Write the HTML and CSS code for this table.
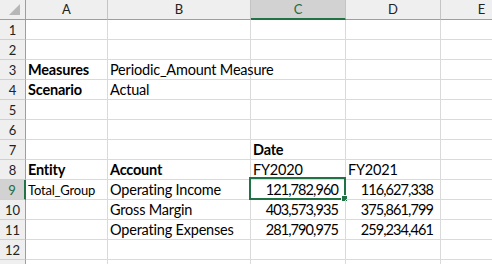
FILE: index.html
```html
<!DOCTYPE html>
<html lang="en">
<head>
    <meta charset="UTF-8">
    <title>Sheet1</title>
    <link rel="stylesheet" href="styles.css">
</head>
<body>

<div class="sheet">
    <!-- column headers -->
    <div class="corner">
        <svg width="26" height="20" viewBox="0 0 26 20"><polygon points="21,5 21,16 10,16" fill="#b7b7b7"/></svg>
    </div>
    <div class="col-head">A</div>
    <div class="col-head">B</div>
    <div class="col-head active">C</div>
    <div class="col-head">D</div>
    <div class="col-head">E</div>

    <div class="row-head">1</div><div class="cell"></div><div class="cell"></div><div class="cell"></div><div class="cell"></div><div class="cell"></div>
    <div class="row-head">2</div><div class="cell"></div><div class="cell"></div><div class="cell"></div><div class="cell"></div><div class="cell"></div>
    <div class="row-head">3</div><div class="cell bold">Measures</div><div class="cell">Periodic_Amount Measure</div><div class="cell"></div><div class="cell"></div><div class="cell"></div>
    <div class="row-head">4</div><div class="cell bold">Scenario</div><div class="cell">Actual</div><div class="cell"></div><div class="cell"></div><div class="cell"></div>
    <div class="row-head">5</div><div class="cell"></div><div class="cell"></div><div class="cell"></div><div class="cell"></div><div class="cell"></div>
    <div class="row-head">6</div><div class="cell"></div><div class="cell"></div><div class="cell"></div><div class="cell"></div><div class="cell"></div>
    <div class="row-head">7</div><div class="cell"></div><div class="cell"></div><div class="cell bold">Date</div><div class="cell"></div><div class="cell"></div>
    <div class="row-head">8</div><div class="cell bold">Entity</div><div class="cell bold">Account</div><div class="cell">FY2020</div><div class="cell">FY2021</div><div class="cell"></div>
    <div class="row-head active">9</div><div class="cell small">Total_Group</div><div class="cell">Operating Income</div><div class="cell num selected">121,782,960<span class="sel-box"></span><span class="handle"></span></div><div class="cell num">116,627,338</div><div class="cell"></div>
    <div class="row-head">10</div><div class="cell"></div><div class="cell">Gross Margin</div><div class="cell num">403,573,935</div><div class="cell num">375,861,799</div><div class="cell"></div>
    <div class="row-head">11</div><div class="cell"></div><div class="cell">Operating Expenses</div><div class="cell num">281,790,975</div><div class="cell num">259,234,461</div><div class="cell"></div>
    <div class="row-head">12</div><div class="cell"></div><div class="cell"></div><div class="cell"></div><div class="cell"></div><div class="cell"></div>
    <div class="row-head"></div><div class="cell"></div><div class="cell"></div><div class="cell"></div><div class="cell"></div><div class="cell"></div>
</div>

</body>
</html>
```

FILE: styles.css
```css
body {
    margin: 0;
    background-color: white;
    overflow: hidden;
    font-family: Lato, "Open Sans", sans-serif;
}

.sheet {
    display: grid;
    grid-template-columns: 26px 82px 143px 95px 95px 82px;
    grid-auto-rows: 20px;
    width: 492px;
    height: 264px;
    overflow: hidden;
}

.corner,
.col-head,
.row-head {
    background-color: #efefef;
    color: #222;
    font-size: 13px;
    box-sizing: border-box;
}

.corner {
    border-right: 1px solid #9e9e9e;
    border-bottom: 1px solid #9e9e9e;
}

.corner svg {
    display: block;
    margin: -1px 0 0 -1px;
}

.col-head {
    text-align: center;
    line-height: 19px;
    border-right: 1px solid #c4c4c4;
    border-bottom: 1px solid #9e9e9e;
}

.col-head.active {
    background-color: #d2d2d2;
    color: #1e6b40;
    border-bottom: 2px solid #217346;
    line-height: 18px;
}

.row-head {
    text-align: center;
    line-height: 20px;
    border-right: 1px solid #9e9e9e;
    border-bottom: 1px solid #d0d0d0;
}

.row-head.active {
    background-color: #d2d2d2;
    color: #1e6b40;
    border-right: 2px solid #217346;
}

.cell {
    position: relative;
    box-sizing: border-box;
    border-right: 1px solid #dadada;
    border-bottom: 1px solid #dadada;
    padding: 0 2px;
    font-size: 14.5px;
    line-height: 20px;
    letter-spacing: -0.2px;
    white-space: nowrap;
    color: #000;
}

.bold {
    font-weight: bold;
}

.small {
    font-size: 13px;
}

.num {
    text-align: right;
    padding-right: 7px;
    letter-spacing: -0.9px;
}

/* selection outline of C9 */
.sel-box {
    position: absolute;
    left: -2px;
    top: -3px;
    width: 97px;
    height: 23px;
    box-sizing: border-box;
    border: 2px solid #217346;
}

.handle {
    position: absolute;
    right: -3px;
    bottom: -3px;
    width: 5px;
    height: 5px;
    background-color: #217346;
    border: 1px solid white;
}
```
